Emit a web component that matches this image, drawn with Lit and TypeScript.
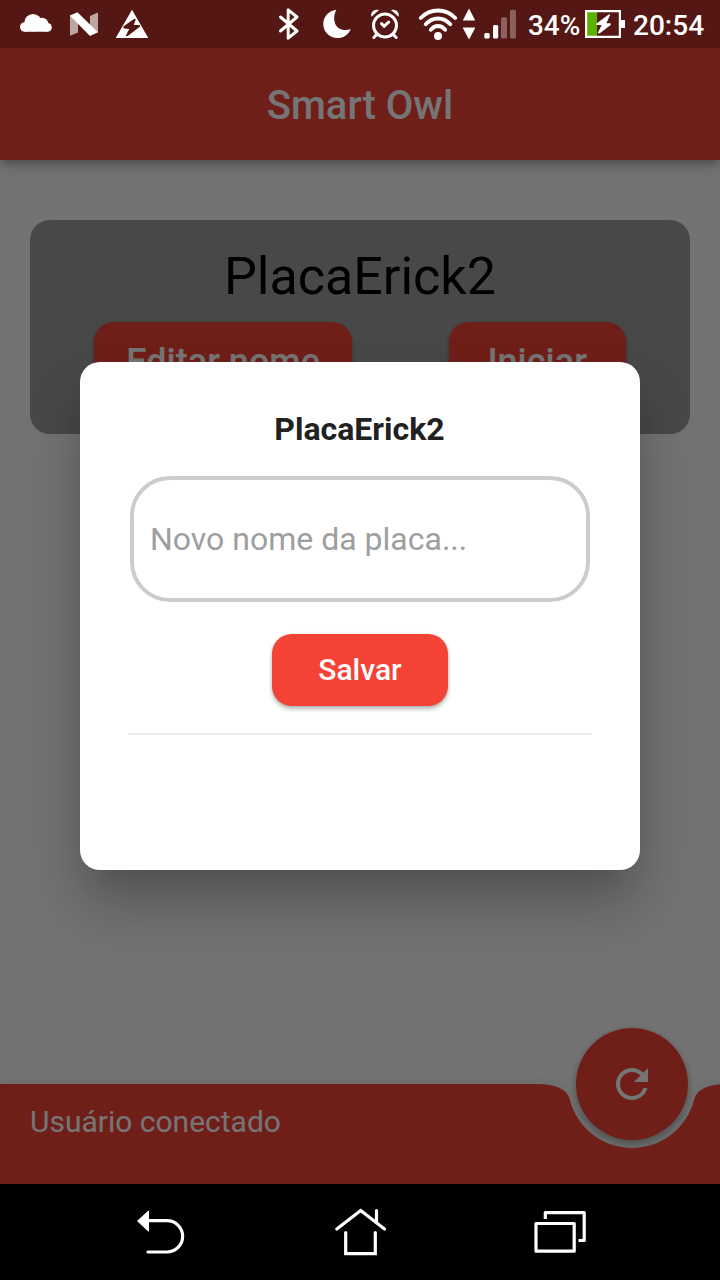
import { LitElement, html, css, svg } from "lit";
import { customElement, property } from "lit/decorators.js";

@customElement("status-bar")
class StatusBar extends LitElement {
  static styles = css`
    :host { display: flex; height: 48px; box-sizing: border-box; padding: 0 16px 0 20px; background: #541713; color: #fff; font: 500 28px/52px Roboto, sans-serif; }
    svg { display: block; flex: none; }
    .left { display: flex; gap: 18px; flex: 1; }
    .right { display: flex; }
    .bt { margin-right: 23px; }
    .moon { margin-right: 19px; }
    .alarm { margin-right: 18px; }
    .wifi { margin-right: 5px; }
    .arrows { margin-right: 9px; }
    .signal { margin-right: 11px; }
    .pct { width: 57px; letter-spacing: -0.1px; }
    .bat { margin-right: 8px; }
    .time { width: 71px; white-space: nowrap; }
  `;
  icon(cls: string, x: number, w: number, body: unknown) {
    return html`<svg class=${cls} width=${w} height="48" viewBox="${x} 0 ${w} 48" fill="#fff">${body}</svg>`;
  }
  render() {
    return html`
      <div class="left">
        ${this.icon("", 20, 32, svg`<circle cx="24.800" cy="27" r="4.800"/><circle cx="33" cy="22.700" r="8.700"/><circle cx="42" cy="24" r="6.300"/><circle cx="47.400" cy="27.400" r="4.400"/><path d="M24.800 24h20l2.600 3v4.800H24.800z"/>`)}
        ${this.icon("", 70, 28, svg`<path opacity=".62" d="M70 15l8 8v9.500l-8 3.200zM90 16l8-3.500V33l-8-8z"/><path d="M69.800 15.500l7.600-3.300L98 32.300 90 35.900z"/>`)}
        ${this.icon("", 116, 32, svg`<path d="M132 9.700L148.300 38H115.700z"/><path fill="#541713" d="M134.200 18.800l-10.900 7.800.4 2 5.500.300L125.700 36h2l12.500-9.500-.6-1.400-5.800-.2 2-5.600z"/>`)}
      </div>
      <div class="right">
        ${this.icon("bt", 278, 22, svg`<path fill="none" stroke="#fff" stroke-width="3" stroke-linejoin="round" stroke-linecap="round" d="M280.500 17L297 31l-8.800 7.200V9.800L297 17l-16.500 14"/>`)}
        ${this.icon("moon", 323, 28, svg`<path d="M336.300 9.800C328 11 323.300 17 323.300 24.200a14 14 0 0 0 14 13.800c6.500 0 11.500-3.600 13.400-8.800-8 2.300-13.500-.500-15.600-5.700-1.800-4.700-.9-9.400 1.200-13.700z"/>`)}
        ${this.icon("alarm", 370, 30, svg`<g fill="none" stroke="#fff" stroke-width="3"><circle cx="385" cy="25.500" r="11.500"/><path stroke-linecap="round" d="M376.800 34.500l-3 3M393.200 34.500l3 3M381.500 23.600l2.600 2.600 4.600-4"/></g><path d="M371.500 16.800c-1.500-4.500 2.500-8.300 7.500-6.800zM398.500 16.800c1.500-4.500-2.500-8.300-7.500-6.800z"/>`)}
        ${this.icon("wifi", 418, 40, svg`<circle cx="438" cy="36" r="4"/><g fill="none" stroke="#fff" stroke-width="3.800" stroke-linecap="round"><path d="M420.700 18Q428 10.500 438 10.500T455.300 18M425.700 24.300Q431 18.500 438 18.500T450.300 24.300M430.800 29.800Q434 26 438 26T445.200 29.800"/></g>`)}
        ${this.icon("arrows", 463, 12, svg`<path d="M469 8.500l6.300 12h-12.600zM469 39.600l6.300-12h-12.600z"/>`)}
        ${this.icon("signal", 484, 33, svg`<rect x="484.300" y="33" width="5.400" height="5.500" rx="1.500"/><rect x="493" y="25" width="5.200" height="13.500" rx="1.500"/><g opacity=".32"><rect x="501" y="17.300" width="6" height="21.200" rx="1.500"/><rect x="510" y="9.700" width="6" height="28.800" rx="1.500"/></g>`)}
        <span class="pct">34%</span>
        ${this.icon("bat", 585, 40, svg`<path fill="#5db100" d="M586 11h11v26h-11z"/><path fill="none" stroke="#fff" stroke-width="2.200" d="M586.100 11.100h33.800v25.800h-33.800z"/><path d="M621 20h4v8h-4zM608.700 14.500l-12.200 9v1.600h5.200l-4.200 8.200h2.300l10.900-8.300v-1.800h-4.300l3.900-8.700z"/>`)}
        <span class="time">20:54</span>
      </div>`;
  }
}

@customElement("raised-button")
class RaisedButton extends LitElement {
  @property() label = "";
  static styles = css`
    :host { display: flex; justify-content: center; align-items: center; box-sizing: border-box; min-width: 176px; height: 72px; padding: 0 32px; border-radius: 20px; background: #f44336; color: #fff; font: 500 30px/36px Roboto, sans-serif; box-shadow: 0 3px 4px rgba(0,0,0,.28), 0 0 3px rgba(0,0,0,.1); }
    :host(.big) { font-size: 36px; font-weight: 500; height: 80px; min-width: 177px; }
  `;
  render() { return html`<span>${this.label}</span>`; }
}

@customElement("app-root")
class AppRoot extends LitElement {
  static styles = css`
    :host { display: flex; flex-direction: column; position: relative; width: 720px; height: 1280px; overflow: hidden; background: #fafafa; font-family: Roboto, sans-serif; }
    status-bar { position: relative; z-index: 3; }
    .appbar { height: 112px; box-sizing: border-box; padding-top: 3px; display: flex; align-items: center; justify-content: center; position: relative; background: #f44336; color: #fff; font-size: 40px; font-weight: 500; line-height: 48px; box-shadow: 0 4px 8px rgba(0,0,0,.2), 0 5px 16px rgba(0,0,0,.16); }
    .content { flex: 1; padding: 60px 30px; }
    .card { box-sizing: border-box; height: 214px; padding: 25px 16px 0; border-radius: 20px; background: #9e9e9e; }
    .name { height: 64px; margin-bottom: 13px; text-align: center; font-size: 52px; line-height: 64px; color: #000; }
    .actions { display: flex; justify-content: space-around; }
    .bottom { position: relative; height: 100px; box-sizing: border-box; padding: 20px 30px; color: #fff; font-size: 30px; line-height: 36px; }
    .shape { position: absolute; left: 0; top: 0; overflow: visible; filter: drop-shadow(0 -1px 6px rgba(0,0,0,.08)); }
    .status { position: relative; }
    .fab { position: absolute; right: 32px; top: -56px; width: 112px; height: 112px; border-radius: 50%; display: grid; place-items: center; background: #f44336; box-shadow: 0 4px 7px rgba(0,0,0,.25), 0 2px 8px rgba(0,0,0,.12); }
    .barrier { position: absolute; inset: 0 0 96px; z-index: 2; padding: 362px 80px 0; box-sizing: border-box; background: rgba(0,0,0,.54); }
    .dialog { box-sizing: border-box; height: 508px; padding: 48px; border-radius: 20px; background: #fff; display: flex; flex-direction: column; align-items: center; box-shadow: 0 22px 30px -14px rgba(0,0,0,.1), 0 36px 60px 0 rgba(0,0,0,.24); }
    .title { margin-right: 1px; font-size: 32px; font-weight: 700; line-height: 38px; color: #212121; }
    .field { box-sizing: border-box; width: 460px; height: 126px; margin: 28px 0 32px; padding: 0 16px; border: 4px solid #ccc; border-radius: 40px; display: flex; align-items: center; font-size: 32px; color: #9e9e9e; }
    .divider { width: 464px; height: 2px; margin-top: 27px; background: #eee; }
    .nav { position: relative; z-index: 3; height: 96px; background: #000; display: flex; justify-content: space-between; padding: 0 133px; }
  `;
  render() {
    return html`
      <status-bar></status-bar>
      <div class="appbar">Smart Owl</div>
      <div class="content">
        <div class="card">
          <div class="name">PlacaErick2</div>
          <div class="actions">
            <raised-button class="big" label="Editar nome"></raised-button>
            <raised-button class="big" label="Iniciar"></raised-button>
          </div>
        </div>
      </div>
      <div class="bottom">
        <div class="fab">
          <svg width="48" height="48" viewBox="0 0 24 24" fill="#fff"><path d="M17.650 6.350A7.958 7.958 0 0 0 12 4c-4.420 0-7.990 3.580-7.990 8s3.570 8 7.990 8c3.730 0 6.840-2.550 7.730-6h-2.080A5.990 5.990 0 0 1 12 18c-3.310 0-6-2.690-6-6s2.690-6 6-6c1.660 0 3.140.690 4.220 1.780L13 11h7V4l-2.350 2.350z"/></svg>
        </div>
        <svg class="shape" width="720" height="100"><path fill="#f44336" d="M0 0H536Q566 0 569.940 15.630A64 64 0 0 0 694.060 15.630Q698 0 728 0V100H0z"/></svg>
        <div class="status">Usuário conectado</div>
      </div>
      <div class="nav">
        <svg width="55" height="96" viewBox="133 1184 55 96"><path fill="#fff" stroke="#fff" stroke-linejoin="round" d="M137.500 1221l11-10v20.200z"/><path fill="none" stroke="#fff" stroke-width="3.200" stroke-linecap="round" d="M148 1220.700H167a15.650 15.650 0 0 1 0 31.300H148"/></svg>
        <svg width="55" height="96" viewBox="333 1184 55 96" fill="none" stroke="#fff" stroke-width="3.200" stroke-linecap="round"><path d="M336.800 1229l23.900-18.500L384.500 1229M376.500 1210.500V1222M345.700 1232.500V1253.700H375.300V1232.500"/></svg>
        <svg width="55" height="96" viewBox="532 1184 55 96" fill="none" stroke="#fff" stroke-width="3.200"><path stroke-linejoin="round" d="M536 1223.500H574.200V1251.200H536zM545.300 1219V1212.700H584.200V1240.500H578.500"/></svg>
      </div>
      <div class="barrier">
        <div class="dialog">
          <div class="title">PlacaErick2</div>
          <div class="field">Novo nome da placa...</div>
          <raised-button label="Salvar"></raised-button>
          <div class="divider"></div>
        </div>
      </div>`;
  }
}
